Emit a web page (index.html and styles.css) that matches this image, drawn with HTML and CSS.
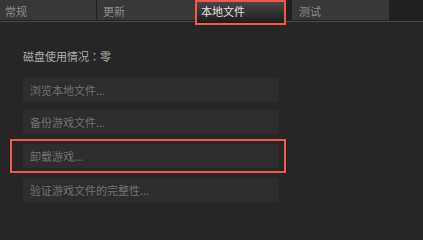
FILE: index.html
```html
<!DOCTYPE html>
<html lang="zh-CN">
<head>
<meta charset="utf-8">
<title>属性</title>
<link rel="stylesheet" href="styles.css">
</head>
<body>
<div class="tabs">
  <div class="tab tab-general">常规</div>
  <div class="tab tab-update">更新</div>
  <div class="tab tab-active">本地文件</div>
  <div class="tab tab-test">测试</div>
</div>
<div class="content">
  <div class="usage">磁盘使用情况<span class="colon" lang="zh-TW">：</span>零</div>
  <div class="actions">
    <div class="btn">浏览本地文件...</div>
    <div class="btn">备份游戏文件...</div>
    <div class="btn btn-marked">卸载游戏...</div>
    <div class="btn">验证游戏文件的完整性...</div>
  </div>
</div>
</body>
</html>
```

FILE: styles.css
```css
html, body {
  margin: 0;
  padding: 0;
}
body {
  background: #262626;
  font-family: "Noto Sans CJK SC", "Noto Sans", sans-serif;
  font-size: 11px;
  width: 423px;
  height: 217px;
  overflow: hidden;
}
.tabs {
  display: flex;
  align-items: flex-start;
  height: 21px;
  background: #202020;
  border-bottom: 1px solid #4a4a4a;
}
.tab {
  flex: none;
  height: 20px;
  box-sizing: border-box;
  background: #383838;
  color: #8c8c8c;
  line-height: 22px;
  padding-left: 6px;
  white-space: nowrap;
}
.tab-general {
  width: 96px;
  padding-left: 5px;
}
.tab-update {
  width: 98px;
  margin-left: 1px;
}
.tab-active {
  width: 91px;
  height: 25px;
  border: 2px solid #f05a4b;
  background: linear-gradient(#474747, #1d1d1d);
  color: #e4e4e4;
  padding-left: 4px;
  line-height: 19px;
}
.tab-test {
  width: 97px;
  margin-left: 6px;
  padding-left: 7px;
}
.content {
  padding: 0 0 0 23px;
}
.usage {
  margin-top: 26px;
  line-height: 16px;
  color: #adadad;
}
.colon {
  font-family: "Noto Sans CJK TC", "Noto Sans CJK SC", sans-serif;
}
.actions {
  margin-top: 14px;
  display: flex;
  flex-direction: column;
  gap: 8px;
  width: 256px;
}
.btn {
  height: 24px;
  line-height: 24px;
  background: #2d2d2d;
  color: #727272;
  padding-left: 7px;
  position: relative;
}
.btn-marked {
  margin: 2px 0;
}
.btn-marked::after {
  content: "";
  position: absolute;
  top: -5px;
  bottom: -5px;
  left: -13px;
  right: -7px;
  border: 2px solid #f05a4b;
}
```
